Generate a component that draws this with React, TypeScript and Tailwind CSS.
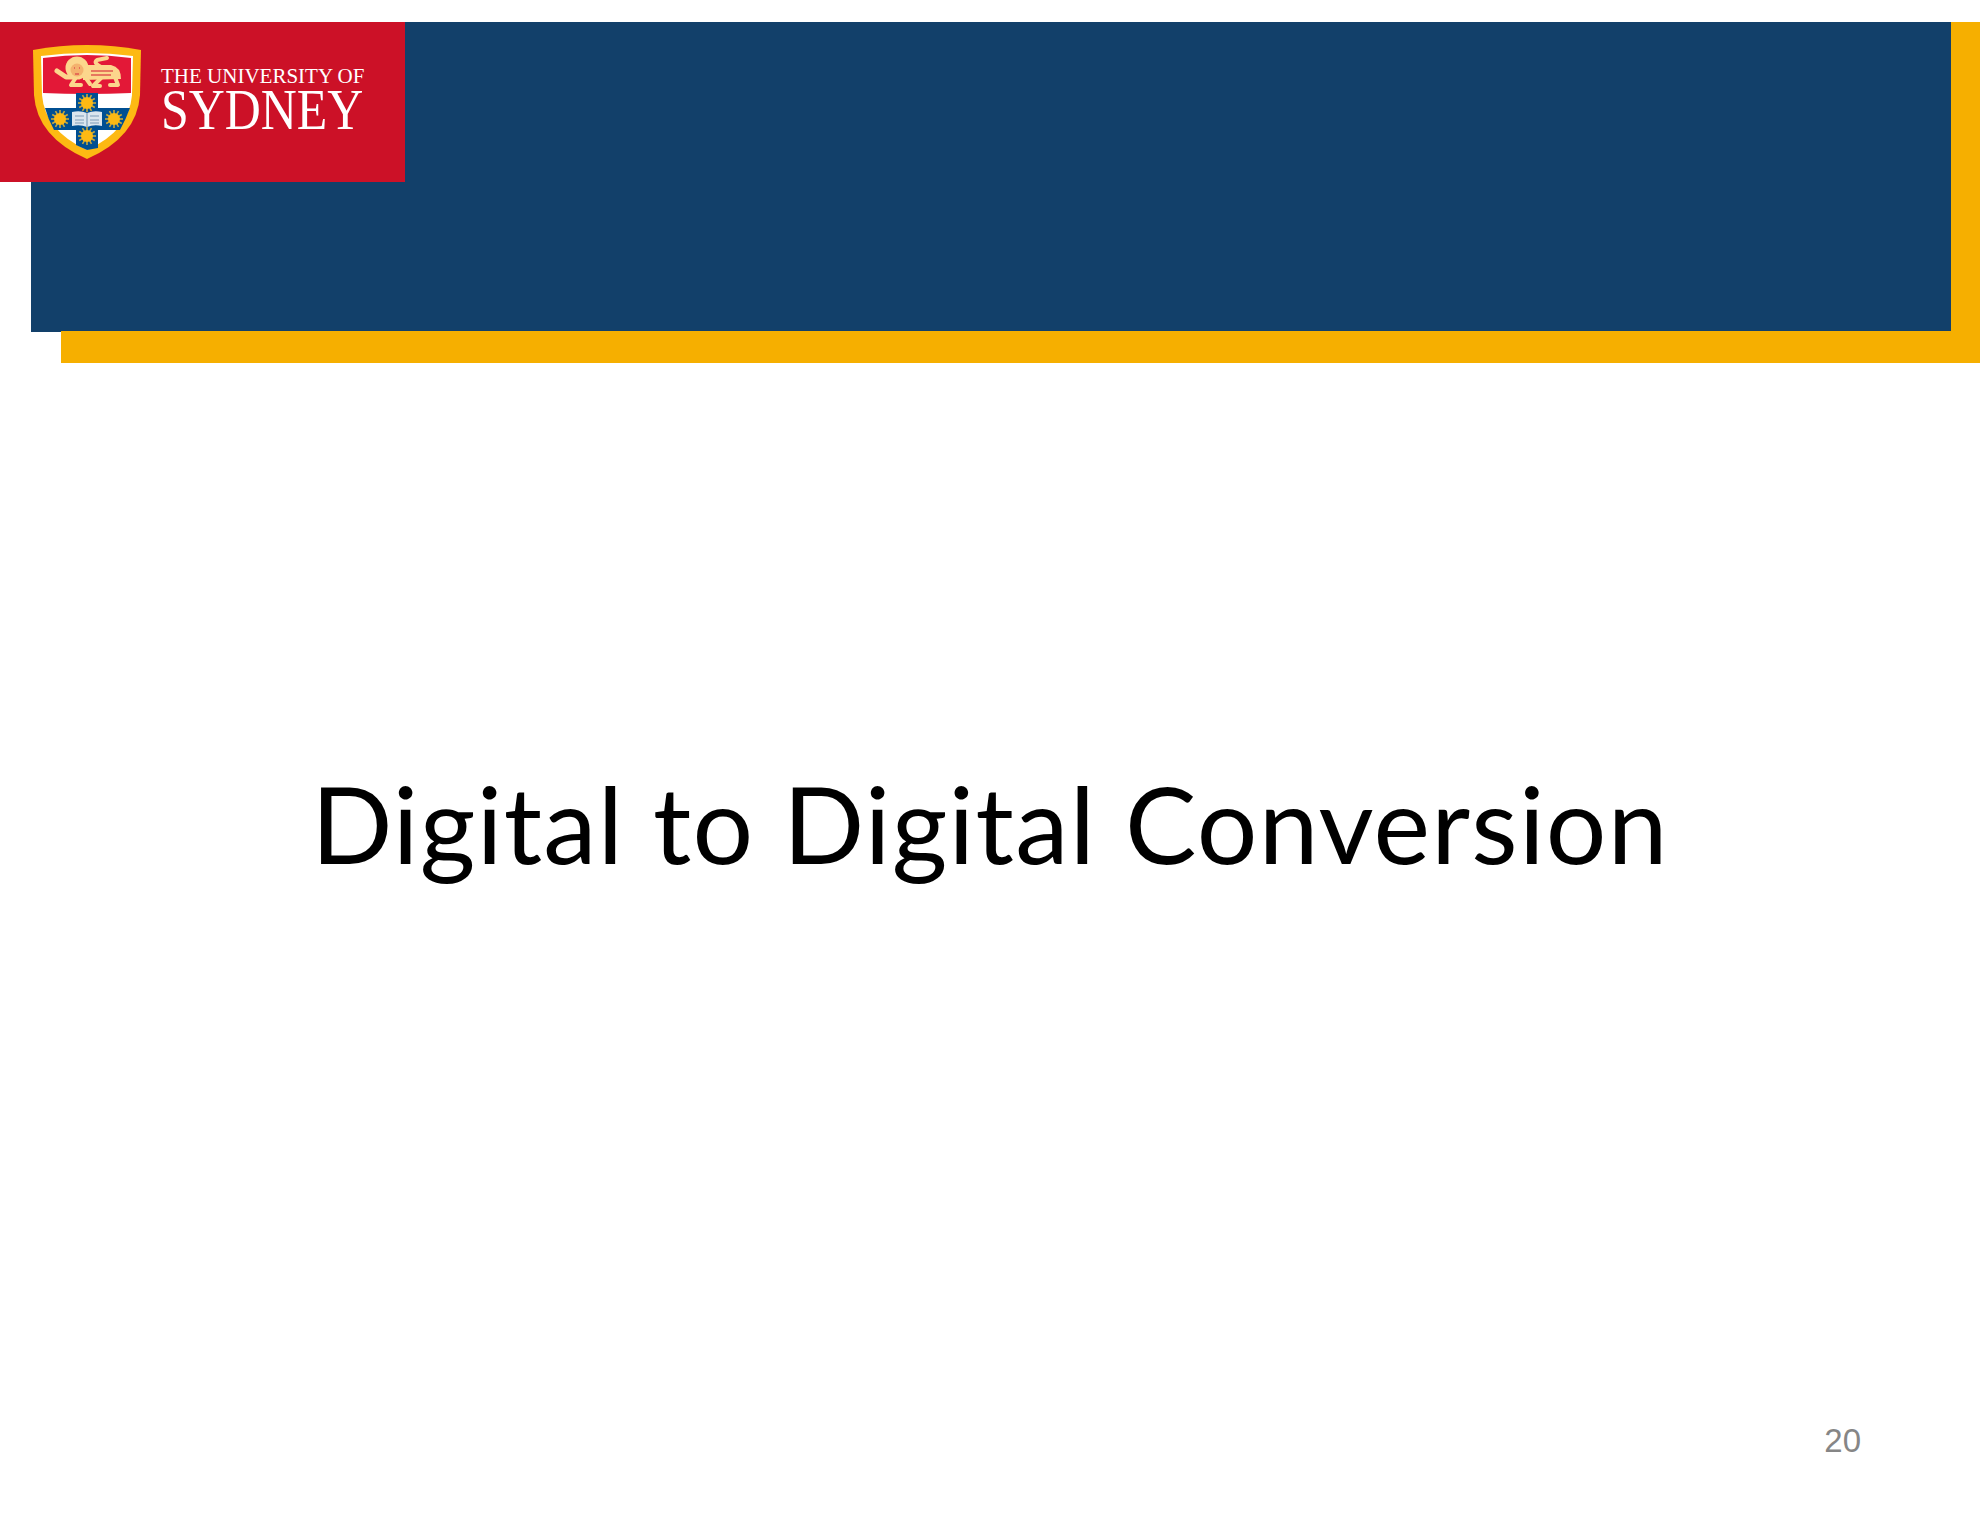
const Sun = ({ x, y }: { x: number; y: number }) => (
  <g>
    {[0, 30, 60, 90, 120, 150].map((a) => (
      <line
        key={a}
        x1={x}
        y1={y - 9}
        x2={x}
        y2={y + 9}
        stroke="#c9a93a"
        strokeWidth="1.6"
        transform={`rotate(${a} ${x} ${y})`}
      />
    ))}
    <circle cx={x} cy={y} r="6" fill="#fdb913" />
  </g>
);

const Crest = () => (
  <svg width="108" height="114" viewBox="0 0 108 114" className="shrink-0">
    <path d="M0 5Q54 -5 108 5L107 50Q104 92 54 114Q4 92 1 50Z" fill="#fdb913" />
    <path d="M8 11Q54 5 100 11L99 50Q96 86 54 105Q12 86 9 50Z" fill="#fff" />
    <path d="M10 13Q54 7 98 13L98 48Q54 50 10 48Z" fill="#e31837" />
    <path d="M12 63H43V48H65V63H97Q93 74 87 85H65V103L54 105L43 100V85H21Q15 74 12 63Z" fill="#004f92" />
    <Sun x={54} y={58} />
    <Sun x={27} y={74} />
    <Sun x={81} y={74} />
    <Sun x={54} y={91} />
    <path d="M39 67Q47 65 54 68Q61 65 69 67V81Q61 79 54 82Q47 79 39 81Z" fill="#dbe5ee" />
    <path d="M54 68V82M42 71H51M42 75H51M42 78H51M57 71H66M57 75H66M57 78H66" stroke="#7f9bb8" strokeWidth="1.2" />
    {/* lion */}
    <g fill="none" stroke="#fcd68c" strokeLinecap="round" strokeLinejoin="round">
      <path d="M24 26L33 32H42" strokeWidth="5" />
      <path d="M44 31L38 40H48" strokeWidth="4" />
      <path d="M52 32L57 39" strokeWidth="4" />
      <path d="M68 22Q60 18 64 15L74 13" strokeWidth="4" />
      <path d="M68 33L60 41H67" strokeWidth="4" />
      <path d="M82 32L85 40H77" strokeWidth="4" />
    </g>
    <path d="M50 20H78Q88 22 88 34L50 35Z" fill="#fcd68c" />
    <circle cx="44" cy="23" r="11.5" fill="#fcd68c" />
    <circle cx="44" cy="25" r="6.5" fill="#f4b26e" />
    <path d="M41 23H42M46 23H47M42 29H46M58 26H80M58 30H78" stroke="#e0574f" strokeWidth="1.3" />
  </svg>
);

const App = () => {
  return (
    <div className="relative flex h-[1530px] w-[1980px] flex-col bg-white pt-[22px] font-['Liberation_Sans',sans-serif]">
      <div className="flex">
        <div className="ml-[31px] h-[310px] flex-1 bg-[#12406a]"></div>
        <div className="w-[29px] bg-[#f6af00]"></div>
      </div>
      <div className="relative z-10 ml-[61px] -mt-px h-[32px] bg-[#f6af00]"></div>

      <div className="absolute top-[22px] left-0 flex h-[160px] w-[405px] items-start bg-[#cc1127] pt-[23px] pl-[33px]">
        <Crest />
        <div className="mt-[20px] ml-[20px] flex flex-col font-['Liberation_Serif',serif] text-white">
          <span className="text-[21px] leading-[22px] whitespace-nowrap">THE UNIVERSITY OF</span>
          <span className="origin-left scale-x-[0.875] text-[57px] leading-[46px] whitespace-nowrap">SYDNEY</span>
        </div>
      </div>

      <div className="flex flex-1 flex-col items-center pt-[395px]">
        <h1 className="font-['Lato',sans-serif] text-[107px] leading-[130px] font-normal tracking-[1.3px] whitespace-nowrap text-black">
          Digital to Digital Conversion
        </h1>
      </div>

      <div className="absolute right-[119px] bottom-[70px] text-[33px] leading-[38px] text-[#868686]">20</div>
    </div>
  );
};

export default App;
